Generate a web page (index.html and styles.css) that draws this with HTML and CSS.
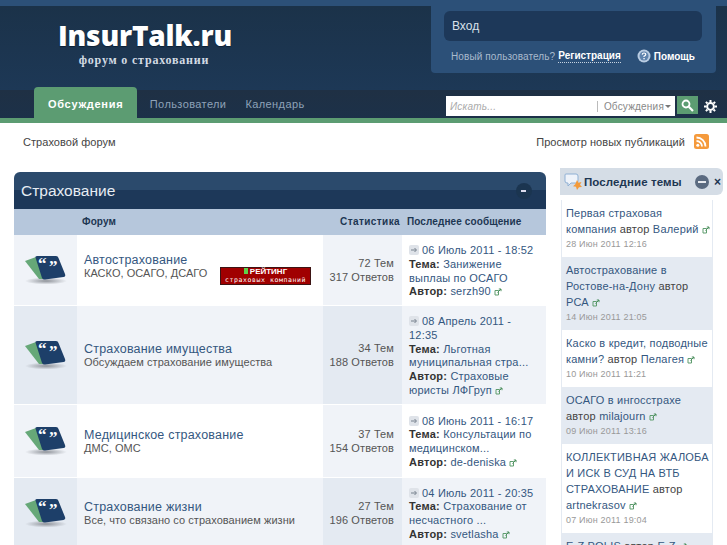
FILE: index.html
```html
<!DOCTYPE html>
<html lang="en">
<head>
<meta charset="UTF-8">
<title>InsurTalk.ru</title>
<link rel="stylesheet" href="styles.css">
</head>
<body>
<svg class="defs" width="0" height="0">
  <defs>
    <radialGradient id="fshadow"><stop offset="0" stop-color="#8f939a"/><stop offset="1" stop-color="#8f939a" stop-opacity="0"/></radialGradient>
  </defs>
  <symbol id="forum-ico" viewBox="0 0 44 32">
    <ellipse cx="22" cy="27" rx="21" ry="3.500" fill="url(#fshadow)"/>
    <path d="M1 7 L12 3 L21 25 L15 25 Z" fill="#66a878"/>
    <path d="M11.500 3.500 Q11 2 13 2 L32 2 Q34 2 34.500 4 L41 20 Q42 22.500 39.500 23 L21 25.500 Q19 25.700 18 24 Z" fill="#1d3f69"/>
    <text x="14" y="15" class="quote">“</text>
    <text x="25" y="18" class="quote">”</text>
  </symbol>
  <symbol id="ext" viewBox="0 0 8 8">
    <path d="M1 2.500h3.500v4.500h-3.500z" fill="none" stroke="#5f9d6f" stroke-width="1"/>
    <path d="M3.500 4.500L7 1M4.800 1H7v2.200" fill="none" stroke="#4c8f5f" stroke-width="1"/>
  </symbol>
  <symbol id="arrow" viewBox="0 0 10 10">
    <rect width="10" height="10" rx="2" fill="#dfe3e9"/>
    <path d="M2 5h5M5.500 3L7.500 5L5.500 7" fill="none" stroke="#77818d" stroke-width="1"/>
  </symbol>
</svg>

<header class="head">
  <div class="brand">
    <div class="logo">InsurTalk.ru</div>
    <div class="slogan">форум о страховании</div>
  </div>
  <div class="userbox">
    <div class="login">Вход</div>
    <div class="userlinks">
      <span>Новый пользователь?</span>
      <a class="reg">Регистрация</a>
      <svg class="help" width="14" height="14" viewBox="0 0 14 14"><circle cx="7" cy="7" r="6.500" fill="#b9cce2"/><circle cx="7" cy="7" r="4.500" fill="#5f83ad"/><path d="M5.200 5.600Q5.400 4 7 4Q8.800 4 8.800 5.500Q8.800 6.400 7 7.300V8" fill="none" stroke="#fff" stroke-width="1.200"/><rect x="6.400" y="9" width="1.300" height="1.300" fill="#fff"/></svg>
      <a class="helplink">Помощь</a>
    </div>
  </div>
</header>

<nav class="nav">
  <a class="tab active">Обсуждения</a>
  <a class="tab">Пользователи</a>
  <a class="tab">Календарь</a>
  <div class="searchbar">
    <div class="search">
      <span class="ph">Искать...</span>
      <span class="scope">Обсуждения<i class="caret"></i></span>
    </div>
    <button class="go"><svg width="13" height="13" viewBox="0 0 13 13"><circle cx="5" cy="5" r="3.500" fill="none" stroke="#fff" stroke-width="1.800"/><path d="M7.800 7.800L12 12" stroke="#fff" stroke-width="2.200"/></svg></button>
    <svg class="gear" width="13" height="13" viewBox="0 0 13 13"><circle cx="6.500" cy="6.500" r="3.400" fill="none" stroke="#fff" stroke-width="2"/><path d="M6.500 0v13M0 6.500h13M1.900 1.900l9.200 9.200M11.100 1.900l-9.200 9.200" stroke="#fff" stroke-width="2" stroke-dasharray="2.200 8.600"/></svg>
  </div>
</nav>

<div class="crumbs">
  <span>Страховой форум</span>
  <div class="crumbs-right">
    <span>Просмотр новых публикаций</span>
    <svg width="15" height="15" viewBox="0 0 15 15"><rect width="15" height="15" rx="2.500" fill="#f59a3c"/><circle cx="3.800" cy="11.200" r="1.500" fill="#fff"/><path d="M2.500 7A5.500 5.500 0 0 1 8 12.500M2.500 3.500A9 9 0 0 1 11.500 12.500" fill="none" stroke="#fff" stroke-width="1.800"/></svg>
  </div>
</div>

<div class="content">
  <main class="board">
    <div class="cat-title">
      <span>Страхование</span>
      <i class="toggle"></i>
    </div>
    <div class="row thead">
      <div></div>
      <div>Форум</div>
      <div class="th-stat">Статистика</div>
      <div>Последнее сообщение</div>
    </div>

    <div class="row forum r1">
      <div class="c-ico"><svg class="fico"><use href="#forum-ico"/></svg></div>
      <div class="c-main banner-cell">
        <a class="ftitle">Автострахование</a>
        <div class="banner-line">
          <span class="fdesc">КАСКО, ОСАГО, ДСАГО</span>
          <div class="banner"><b><i class="bars"></i>РЕЙТИНГ</b><span>страховых компаний</span></div>
        </div>
      </div>
      <div class="c-stat">72 Тем<br>317 Ответов</div>
      <div class="c-last">
        <svg class="arr"><use href="#arrow"/></svg><a>06 Июль 2011 - 18:52</a><br>
        <b>Тема:</b> <a>Занижение выплаы по ОСАГО</a><br>
        <b>Автор:</b> <a>serzh90</a> <svg class="ext"><use href="#ext"/></svg>
      </div>
    </div>

    <div class="row forum r2">
      <div class="c-ico"><svg class="fico"><use href="#forum-ico"/></svg></div>
      <div class="c-main">
        <a class="ftitle">Страхование имущества</a>
        <div class="fdesc">Обсуждаем страхование имущества</div>
      </div>
      <div class="c-stat">34 Тем<br>188 Ответов</div>
      <div class="c-last">
        <svg class="arr"><use href="#arrow"/></svg><a>08 Апрель 2011 - 12:35</a><br>
        <b>Тема:</b> <a>Льготная муниципальная стра...</a><br>
        <b>Автор:</b> <a>Страховые юристы ЛФГруп</a> <svg class="ext"><use href="#ext"/></svg>
      </div>
    </div>

    <div class="row forum r1 tall">
      <div class="c-ico"><svg class="fico"><use href="#forum-ico"/></svg></div>
      <div class="c-main">
        <a class="ftitle">Медицинское страхование</a>
        <div class="fdesc">ДМС, ОМС</div>
      </div>
      <div class="c-stat">37 Тем<br>154 Ответов</div>
      <div class="c-last">
        <svg class="arr"><use href="#arrow"/></svg><a>08 Июнь 2011 - 16:17</a><br>
        <b>Тема:</b> <a>Консультации по медицинском...</a><br>
        <b>Автор:</b> <a>de-deniska</a> <svg class="ext"><use href="#ext"/></svg>
      </div>
    </div>

    <div class="row forum r2">
      <div class="c-ico"><svg class="fico"><use href="#forum-ico"/></svg></div>
      <div class="c-main">
        <a class="ftitle">Страхование жизни</a>
        <div class="fdesc">Все, что связано со страхованием жизни</div>
      </div>
      <div class="c-stat">27 Тем<br>196 Ответов</div>
      <div class="c-last">
        <svg class="arr"><use href="#arrow"/></svg><a>04 Июль 2011 - 20:35</a><br>
        <b>Тема:</b> <a>Страхование от несчастного ...</a><br>
        <b>Автор:</b> <a>svetlasha</a> <svg class="ext"><use href="#ext"/></svg>
      </div>
    </div>
  </main>

  <aside class="side">
    <div class="side-head">
      <svg width="20" height="20" viewBox="0 0 20 20"><path d="M2 2h10q2 0 2 2v5q0 2-2 2H7l-3 3v-3H3q-2 0-2-2V3q0-1 1-1z" fill="#eef3fa" stroke="#8fb0d4"/><path d="M13 8l1.500 2.800 3-.8-1.500 2.800 2 2.200-3 .2-2 2.800-1-3.200-3-.6 2.300-2z" fill="#f39a3a"/></svg>
      <b>Последние темы</b>
      <i class="side-min"></i>
      <span class="side-x">×</span>
    </div>
    <ul class="topics">
      <li><a>Первая страховая компания</a> автор <a>Валерий</a> <svg class="ext"><use href="#ext"/></svg><small>28 Июн 2011 12:16</small></li>
      <li class="alt"><a>Автострахование в Ростове-на-Дону</a> автор <a>РСА</a> <svg class="ext"><use href="#ext"/></svg><small>14 Июн 2011 21:05</small></li>
      <li><a>Каско в кредит, подводные камни?</a> автор <a>Пелагея</a> <svg class="ext"><use href="#ext"/></svg><small>10 Июн 2011 11:21</small></li>
      <li class="alt"><a>ОСАГО в ингосстрахе</a> автор <a>milajourn</a> <svg class="ext"><use href="#ext"/></svg><small>09 Июн 2011 13:16</small></li>
      <li><a>КОЛЛЕКТИВНАЯ ЖАЛОБА И ИСК В СУД НА ВТБ СТРАХОВАНИЕ</a> автор <a>artnekrasov</a> <svg class="ext"><use href="#ext"/></svg><small>07 Июн 2011 19:04</small></li>
      <li class="alt"><a>E-Z POLIS</a> автор <a>E-Z</a> <svg class="ext"><use href="#ext"/></svg></li>
    </ul>
  </aside>
</div>
</body>
</html>
```

FILE: styles.css
```css
html, body {
  margin: 0;
  height: 545px;
  overflow: hidden;
  background: #fff;
}
body {
  font-family: "Liberation Sans", Arial, sans-serif;
  font-size: 11px;
  letter-spacing: 0.2px;
  color: #444;
}
.defs { position: absolute; }
.quote { font: bold 17px "Liberation Serif", serif; fill: #fff; }

/* header */
.head {
  height: 90px;
  box-sizing: border-box;
  border-top: 6px solid #2c5078;
  background: linear-gradient(#1b3249, #1d3856);
  display: flex;
  justify-content: space-between;
  align-items: flex-start;
}
.brand {
  margin-left: 57px;
  padding-top: 13px;
  width: 176px;
  text-align: center;
}
.logo {
  font: 800 28px/33px "Open Sans", sans-serif;
  color: #fff;
  text-shadow: 0 1px 1px #0d1f33;
  letter-spacing: -0.2px;
  white-space: nowrap;
}
.slogan {
  font: bold 12px/15px "Liberation Serif", serif;
  color: #d3dbe4;
  margin-top: 1px;
  padding-right: 2px;
  letter-spacing: 0.8px;
}
.userbox {
  margin: -6px 11px 0 0;
  width: 285px;
  height: 73px;
  box-sizing: border-box;
  padding: 11px 14px 0 13px;
  background: #2c5078;
  border-radius: 0 0 4px 4px;
}
.login {
  height: 30px;
  line-height: 30px;
  padding-left: 8px;
  background: #1d3859;
  border-radius: 6px;
  color: #d9e1ea;
  font-size: 12px;
  letter-spacing: 0;
}
.userlinks {
  display: flex;
  align-items: center;
  margin: 8px 0 0 7px;
  font-size: 10px;
  letter-spacing: 0.1px;
  color: #a9bacd;
  white-space: nowrap;
}
.reg {
  margin-left: 3px;
  color: #fff;
  font-weight: bold;
  letter-spacing: 0;
  border-bottom: 1px dotted #c7d3e0;
  padding-bottom: 1px;
}
.help { margin-left: 16px; }
.helplink {
  margin-left: 3px;
  color: #fff;
  font-weight: bold;
  letter-spacing: 0;
}

/* nav */
.nav {
  height: 28px;
  border-bottom: 5px solid #5c9c72;
  background: linear-gradient(#1f3044, #1c3149);
  display: flex;
  align-items: flex-end;
  padding-left: 34px;
}
.tab {
  height: 28px;
  line-height: 29px;
  padding: 0 9.500px;
  color: #8ea2b8;
  font-size: 11px;
  letter-spacing: 0.4px;
}
.tab.active {
  height: 31px;
  line-height: 34px;
  margin-top: -3px;
  padding: 0 14px;
  margin-right: 3px;
  border-radius: 4px 4px 0 0;
  background: #5c9c72;
  color: #fff;
  font-weight: bold;
  letter-spacing: 0.7px;
}
.searchbar {
  margin-left: auto;
  display: flex;
  align-items: center;
  align-self: flex-start;
  margin-top: 6px;
  margin-right: 10px;
}
.search {
  width: 229px;
  height: 20px;
  box-sizing: border-box;
  background: #fff;
  display: flex;
  justify-content: space-between;
  align-items: center;
  padding: 0 4px;
  font-size: 10px;
  color: #999;
}
.ph { font-style: italic; font-size: 10px; color: #aaa; }
.scope {
  border-left: 1px solid #bbb;
  padding-left: 6px;
  color: #888;
  font-size: 10px;
}
.caret {
  display: inline-block;
  border: 3px solid transparent;
  border-top-color: #777;
  border-bottom: 0;
  margin-left: 1px;
  vertical-align: 2px;
}
.go {
  width: 21px;
  height: 18px;
  margin: 0 0 2px 2px;
  padding: 0;
  border: 0;
  background: #5c9c72;
  display: flex;
  align-items: center;
  justify-content: center;
}
.gear { margin-left: 6px; }

/* breadcrumb */
.crumbs {
  height: 49px;
  box-sizing: border-box;
  padding: 0 18px 12px 23px;
  display: flex;
  justify-content: space-between;
  align-items: center;
  color: #444;
  letter-spacing: 0.05px;
}
.crumbs-right {
  display: flex;
  align-items: center;
  gap: 9px;
}

/* board */
.content {
  display: flex;
  align-items: flex-start;
  padding-left: 14px;
}
.board { width: 532px; }
.cat-title {
  height: 37px;
  background: linear-gradient(#2b4a6c 0, #2b4a6c 50%, #1d3859 50%, #1d3859 100%);
  border-radius: 6px 6px 0 0;
  color: #e6ecf3;
  font-size: 15.500px;
  letter-spacing: 0;
  padding: 0 14px 0 7px;
  display: flex;
  justify-content: space-between;
  align-items: center;
}
.toggle {
  width: 16px;
  height: 16px;
  border-radius: 50%;
  background: #1b3550;
  position: relative;
}
.toggle::after {
  content: "";
  position: absolute;
  left: 5px;
  top: 7px;
  width: 5px;
  height: 2px;
  background: #dde;
}
.row {
  display: grid;
  grid-template-columns: 63px 246px 79px 144px;
}
.thead {
  height: 26px;
  line-height: 26px;
  background: #b6c7dc;
  color: #1d3652;
  font-weight: bold;
  font-size: 10px;
  letter-spacing: 0.1px;
}
.thead > div:nth-child(2) { padding-left: 5px; }
.th-stat { text-align: right; white-space: nowrap; padding-right: 2px; letter-spacing: 0.4px; }
.thead > div:last-child { padding-left: 5px; white-space: nowrap; }
.forum { border-bottom: 1px solid #fff; }
.r1 { background: #fff; }
.r2 { background: #f0f3f8; }
.c-ico, .c-stat { background: #f0f3f8; }
.r2 .c-ico, .r2 .c-stat { background: #e4eaf2; }
.c-ico {
  display: flex;
  align-items: center;
  justify-content: center;
}
.fico { width: 44px; height: 32px; }
.c-main {
  padding: 2px 12px 0 7px;
  display: flex;
  flex-direction: column;
  justify-content: center;
}
.banner-cell { padding-bottom: 4px; }
.ftitle { color: #34577f; font-size: 12.500px; line-height: 14px; }
.fdesc { color: #555; line-height: 13px; letter-spacing: 0.05px; }
.banner-line {
  display: flex;
  justify-content: space-between;
  align-items: flex-start;
}
.banner {
  width: 91px;
  height: 18px;
  box-sizing: border-box;
  border: 1px solid #3c1414;
  background: #a00000;
  color: #fff;
  text-align: center;
  font-size: 7px;
  line-height: 8px;
  white-space: nowrap;
  letter-spacing: 0;
}
.banner b { display: block; font-size: 8px; }
.banner span { font-family: "DejaVu Sans Mono", monospace; font-size: 6.500px; letter-spacing: 0.600px; display: block; }
.bars {
  display: inline-block;
  width: 4px;
  height: 6px;
  background: #5fd04a;
  margin-right: 2px;
}
.c-stat {
  text-align: right;
  padding-right: 8px;
  display: flex;
  align-items: center;
  justify-content: flex-end;
  line-height: 14px;
  color: #555;
  letter-spacing: 0.1px;
}
.c-last {
  padding: 9px 7px 6px 7px;
  line-height: 13.750px;
  color: #333;
}
.tall .c-last { padding: 10px 7px 7px 7px; }
.c-last a { color: #34577f; }
.c-last b { color: #333; }
.arr { width: 10px; height: 10px; margin-right: 3px; vertical-align: -1px; }
.ext { width: 8px; height: 8px; vertical-align: -1px; }

/* sidebar */
.side { width: 163px; margin-left: 14px; flex-shrink: 0; margin-top: -4px; }
.side-head {
  height: 27px;
  background: #d5dde6;
  border-radius: 0 6px 6px 0;
  display: flex;
  align-items: center;
  padding: 0 2px 0 4px;
  color: #1d3652;
  font-size: 11.500px;
  letter-spacing: 0.1px;
}
.side-head b { flex: 1; white-space: nowrap; }
.side-min {
  width: 14px;
  height: 14px;
  border-radius: 50%;
  background: #5a6a80;
  flex-shrink: 0;
  position: relative;
}
.side-min::after {
  content: "";
  position: absolute;
  left: 3px;
  top: 6px;
  width: 8px;
  height: 2px;
  background: #e6e9ee;
}
.side-x { margin-left: 5px; color: #1d3652; font-weight: bold; font-size: 12px; }
.topics {
  list-style: none;
  margin: 5px 10px 0 1px;
  padding: 0;
  border: 1px solid #e4eaf2;
  border-width: 0 1px;
}
.topics li {
  padding: 5px 2px 6px 4px;
  line-height: 16px;
  color: #444;
}
.topics li.alt { background: #e4eaf2; }
.topics a { color: #34577f; }
.topics small {
  display: block;
  font-size: 9px;
  color: #999;
  line-height: 14px;
}
```
